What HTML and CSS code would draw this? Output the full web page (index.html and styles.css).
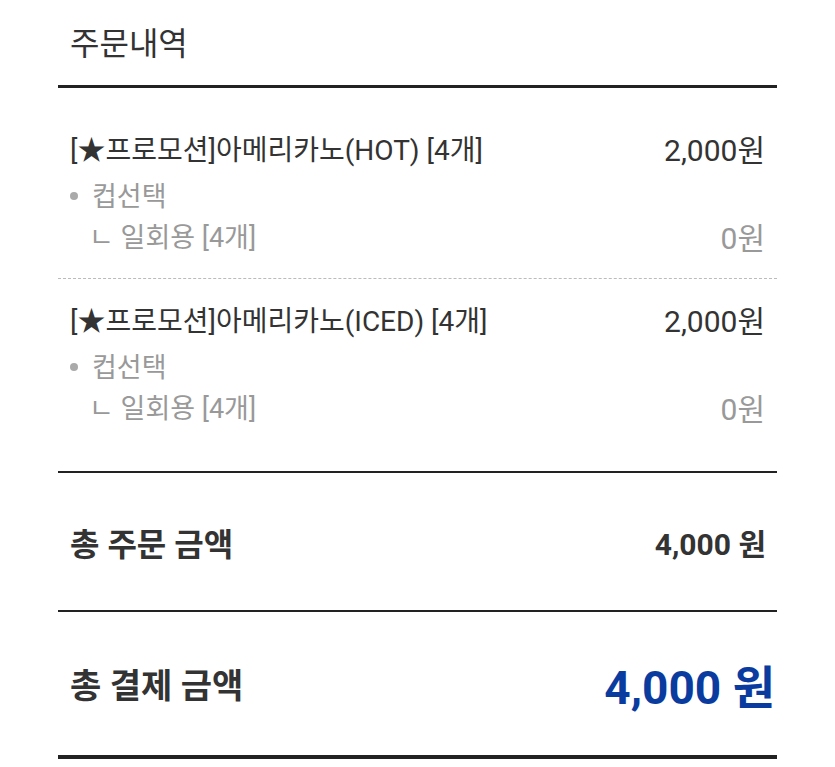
FILE: index.html
```html
<!DOCTYPE html>
<html lang="ko">
<head>
<meta charset="utf-8">
<link rel="stylesheet" href="styles.css">
</head>
<body>
<div class="page">
  <h1 class="title">주문내역</h1>
  <div class="list">
    <div class="item">
      <div class="row main"><span>[★프로모션]아메리카노(HOT) [4개]</span><span class="price">2,000원</span></div>
      <div class="row opt"><span class="bullet">컵선택</span></div>
      <div class="row opt sub"><span>ㄴ 일회용 [4개]</span><span class="price">0원</span></div>
    </div>
    <div class="item">
      <div class="row main"><span>[★프로모션]아메리카노(ICED) [4개]</span><span class="price">2,000원</span></div>
      <div class="row opt"><span class="bullet">컵선택</span></div>
      <div class="row opt sub"><span>ㄴ 일회용 [4개]</span><span class="price">0원</span></div>
    </div>
  </div>
  <div class="total order"><span>총 주문 금액</span><span class="sum">4,000 원</span></div>
  <div class="total pay"><span>총 결제 금액</span><span class="amount">4,000 원</span></div>
</div>
</body>
</html>
```
FILE: styles.css
```css
html, body { margin: 0; padding: 0; background: #fff; }
body { font-family: Roboto, "Noto Sans CJK KR", sans-serif; color: #333; }
.page { width: 719px; margin-left: 58px; }
.title { margin: 0; font-weight: 400; font-size: 32px; line-height: 88px; height: 85px; padding-left: 12px; color: #333; border-bottom: 3px solid #222; }
.list { border-bottom: 2px solid #222; }
.item { padding: 34px 12px 22px 12px; }
.item + .item { border-top: 1px dashed #bbb; padding-top: 14px; padding-bottom: 44px; }
.row { display: flex; justify-content: space-between; align-items: center; }
.main { font-size: 28px; height: 52px; color: #333; }
.opt { font-size: 27px; height: 41px; color: #999; }
.price { font-size: 30px; }
.bullet::before { content: ""; display: inline-block; width: 8px; height: 8px; border-radius: 50%; background: #aaa; margin: 0 14px 5px 0; vertical-align: middle; }
.sub { padding-left: 19px; }
.total { display: flex; justify-content: space-between; align-items: center; padding: 0 11px 0 12px; font-weight: 700; }
.order { height: 137px; font-size: 32px; border-bottom: 2px solid #222; }
.sum { font-size: 30px; }
.pay { height: 143px; font-size: 34px; border-bottom: 4px solid #222; padding-right: 2px; }
.amount { color: #0a3c9f; font-size: 46px; }
```
